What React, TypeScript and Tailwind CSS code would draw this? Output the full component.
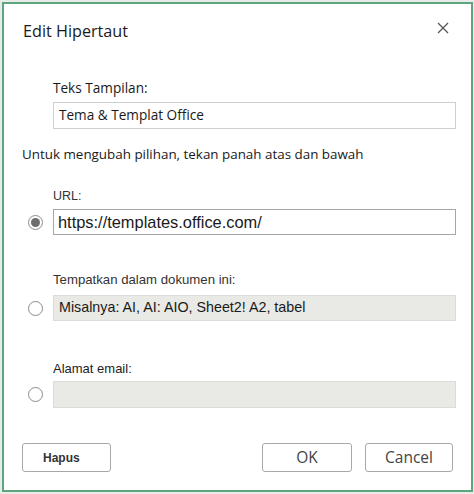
import React from 'react'

const SEGOE = { fontFamily: '"Open Sans", "Noto Sans", sans-serif' }
const ARIAL = { fontFamily: '"Liberation Sans", Arial, sans-serif' }

function Radio({ checked }: { checked?: boolean }) {
    return (
        <div className="ml-[6px] mr-[10px] flex h-[15px] w-[15px] shrink-0 items-center justify-center rounded-full border border-[#8c8c8c] bg-white">
            {checked && <div className="h-[9px] w-[9px] rounded-full bg-[#6e6e6e]" />}
        </div>
    )
}

export default function App() {
    return (
        <div className="h-[494px] w-[474px] bg-[#e8ece9] pl-[2px] pt-[2px]">
            <div className="flex h-[490px] w-[471px] flex-col border-2 border-[#5ea47e] bg-white text-[#1a1a1a]">

                {/* Header */}
                <div className="flex items-start justify-between pl-[19px] pr-[22px] pt-[16px]">
                    <h1 className="text-[16.2px] leading-[22px]" style={SEGOE}>Edit Hipertaut</h1>
                    <svg width="12" height="12" viewBox="0 0 12 12" className="mt-[2px]">
                        <path d="M1 1 L11 11 M11 1 L1 11" stroke="#555" strokeWidth="1.3" fill="none" />
                    </svg>
                </div>

                <div className="flex flex-col pl-[18px] pr-[15px]">
                    {/* Display text */}
                    <p className="ml-[31px] mt-[37px] text-[13.6px] leading-[18px]" style={SEGOE}>Teks Tampilan:</p>
                    <div className="ml-[31px] mt-[5px] flex h-[27px] items-center border border-[#cfcfcf] px-[5px] text-[13.6px]" style={SEGOE}>
                        Tema &amp; Templat Office
                    </div>

                    <p className="mt-[15px] text-[13.4px] leading-[20px]" style={SEGOE}>
                        Untuk mengubah pilihan, tekan panah atas dan bawah
                    </p>

                    {/* URL */}
                    <p className="ml-[31px] mt-[24px] text-[12.5px] leading-[16px] text-[#333]" style={ARIAL}>URL:</p>
                    <div className="mt-[5px] flex items-center">
                        <Radio checked />
                        <div className="flex h-[26px] flex-1 items-center border border-[#a6a6a6] px-[4px] text-[16.4px]" style={ARIAL}>
                            https://templates.office.com/
                        </div>
                    </div>

                    {/* Place in document */}
                    <p className="ml-[31px] mt-[37px] text-[13.2px] leading-[16px] text-[#333]" style={ARIAL}>Tempatkan dalam dokumen ini:</p>
                    <div className="mt-[7px] flex items-center">
                        <Radio />
                        <div className="flex h-[26px] flex-1 items-center border border-[#dcdcd6] bg-[#e9e9e5] px-[5px] text-[14.3px]" style={ARIAL}>
                            Misalnya: AI, AI: AIO, Sheet2! A2, tabel
                        </div>
                    </div>

                    {/* Email */}
                    <p className="ml-[31px] mt-[40px] text-[13px] leading-[16px] text-[#222]" style={ARIAL}>Alamat email:</p>
                    <div className="mt-[4px] flex items-center">
                        <Radio />
                        <div className="h-[27px] flex-1 border border-[#dcdcd6] bg-[#e9e9e5]" />
                    </div>
                </div>

                {/* Buttons */}
                <div className="mt-[35px] flex items-center pl-[18px] pr-[18px]">
                    <button className="h-[29px] w-[89px] rounded-[3px] border border-[#a8a8a8] bg-white pl-[20px] text-left text-[12px] font-bold text-[#333]" style={ARIAL}>
                        Hapus
                    </button>
                    <div className="flex-1" />
                    <button className="h-[29px] w-[90px] rounded-[3px] border border-[#a8a8a8] bg-white text-[15.5px] text-[#444]" style={SEGOE}>
                        OK
                    </button>
                    <button className="ml-[13px] h-[29px] w-[88px] rounded-[3px] border border-[#a8a8a8] bg-white text-[15.5px] text-[#444]" style={SEGOE}>
                        Cancel
                    </button>
                </div>
            </div>
        </div>
    )
}
